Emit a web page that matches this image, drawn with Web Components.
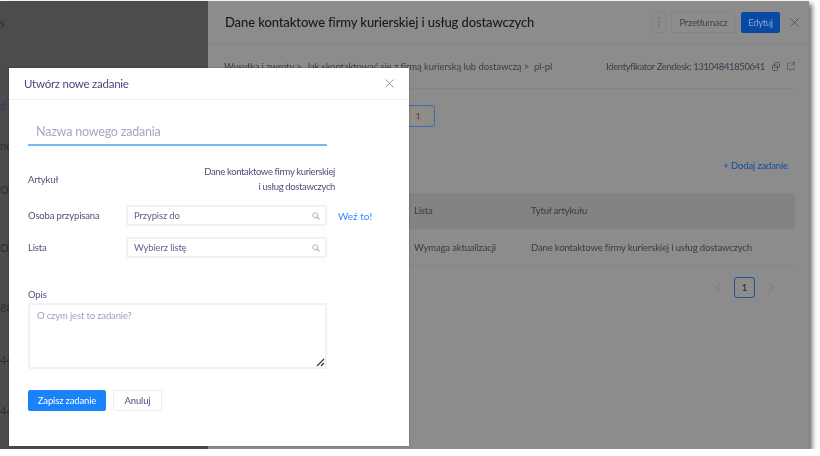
<!DOCTYPE html>
<html lang="pl">
<head>
<meta charset="utf-8">
<title>Utwórz nowe zadanie</title>
<style>
    html, body { margin: 0; padding: 0; background: #fff; overflow: hidden; }
    body { font-family: Lato, "Noto Sans", sans-serif; }
</style>
</head>
<body>
<app-shell>
    <side-list slot="side"></side-list>
    <article-panel slot="main"></article-panel>
    <task-modal slot="modal"></task-modal>
</app-shell>

<script>
class AppShell extends HTMLElement {
    constructor() {
        super();
        this.attachShadow({mode: 'open'}).innerHTML = `
            <style>
                :host {
                    display: block;
                    width: 809px;
                    height: 448px;
                    margin-top: 1px;
                    position: relative;
                    box-shadow: 3px 3px 5px rgba(0, 0, 0, .6);
                    filter: blur(.35px);
                }
                .row { display: flex; height: 100%; }
                .modal { position: absolute; left: 9px; top: 67px; }
            </style>
            <div class="row">
                <slot name="side"></slot>
                <slot name="main"></slot>
            </div>
            <div class="modal"><slot name="modal"></slot></div>
        `;
    }
}

class SideList extends HTMLElement {
    constructor() {
        super();
        this.attachShadow({mode: 'open'}).innerHTML = `
            <style>
                :host {
                    display: block;
                    width: 208px;
                    flex: none;
                    background: #4c4c4c;
                    color: #2e2e2e;
                    font-size: 11px;
                    overflow: hidden;
                }
                div { line-height: 16px; height: 16px; }
                .a { margin-top: 14px; }
                .b { margin-top: 67px; color: #27405c; }
                .c { margin-top: 24px; }
                .d { margin-top: 28px; }
                .e { margin-top: 42px; }
                .f { margin-top: 44px; }
                .g { margin-top: 36px; }
                .h { margin-top: 35px; }
            </style>
            <div class="a">s</div>
            <div class="b">d</div>
            <div class="c">nd</div>
            <div class="d">Oc</div>
            <div class="e">Oc</div>
            <div class="f">887</div>
            <div class="g">44</div>
            <div class="h">44</div>
        `;
    }
}

class ArticlePanel extends HTMLElement {
    constructor() {
        super();
        this.attachShadow({mode: 'open'}).innerHTML = `
            <style>
                :host {
                    display: block;
                    flex: 1;
                    min-width: 0;
                    background: #8c8c8c;
                    color: #3a3a44;
                    font-size: 9.5px;
                    letter-spacing: -.15px;
                }
                header {
                    display: flex;
                    align-items: center;
                    height: 42px;
                    padding: 0 10px 0 17px;
                    border-bottom: 1px solid #858585;
                }
                h1 {
                    flex: 1;
                    margin: 0;
                    font-size: 13px;
                    font-weight: 500;
                    letter-spacing: -.1px;
                    color: #191919;
                    white-space: nowrap;
                }
                .more {
                    box-sizing: border-box;
                    width: 14px;
                    height: 21px;
                    border: 1px solid #858585;
                    border-radius: 2px;
                    display: flex;
                    align-items: center;
                    justify-content: center;
                    margin-right: 5px;
                }
                .btn {
                    box-sizing: border-box;
                    width: 65px;
                    height: 21px;
                    line-height: 19px;
                    text-align: center;
                    border: 1px solid #858585;
                    border-radius: 2px;
                    color: #444;
                    letter-spacing: -.3px;
                }
                .btn.primary {
                    width: 39px;
                    background: #0849a3;
                    border-color: #0849a3;
                    color: #8ba6cc;
                    margin-left: 5px;
                    margin-right: 10px;
                }
                .meta {
                    display: flex;
                    justify-content: space-between;
                    align-items: center;
                    margin: 0 14px 0 16px;
                    height: 44px;
                    border-bottom: 1px solid #858585;
                    color: #3c3c4c;
                    white-space: nowrap;
                    letter-spacing: -.09px;
                }
                .meta .ids { display: flex; align-items: center; letter-spacing: -.38px; }
                .meta svg { margin-left: 7px; }
                .status {
                    display: flex;
                    justify-content: flex-end;
                    align-items: center;
                    box-sizing: border-box;
                    margin: 16px 0 0 0;
                    width: 227px;
                    height: 22px;
                    padding-right: 10px;
                    border: 1px solid #3d6ba8;
                    border-radius: 3px;
                }
                .badge {
                    width: 12px;
                    height: 13px;
                    border: 1px solid #a98876;
                    border-radius: 2px;
                    color: #5e3a25;
                    font-size: 8px;
                    text-align: center;
                    box-sizing: border-box;
                    line-height: 11px;
                }
                .add {
                    margin: 31px 21px 0 0;
                    text-align: right;
                    height: 16px;
                    line-height: 16px;
                    color: #0d4c9e;
                }
                .table { margin: 19px 14px 0 16px; }
                .tr {
                    display: grid;
                    grid-template-columns: 190px 117px 1fr;
                    align-items: center;
                }
                .head {
                    height: 36px;
                    background: #838383;
                    border-radius: 3px 3px 0 0;
                }
                .head span { position: relative; top: -1px; }
                .body { height: 36px; border-bottom: 1px solid #858585; }
                .pager-row {
                    display: flex;
                    justify-content: flex-end;
                    align-items: center;
                    gap: 13px;
                    margin: 11px 35px 0 0;
                }
                .page {
                    width: 21px;
                    height: 21px;
                    box-sizing: border-box;
                    border: 1px solid #28528c;
                    border-radius: 3px;
                    text-align: center;
                    line-height: 19px;
                    color: #222;
                }
                svg { display: block; }
            </style>
            <header>
                <h1>Dane kontaktowe firmy kurierskiej i usług dostawczych</h1>
                <div class="more">
                    <svg width="2" height="10" viewBox="0 0 2 10" fill="#5a5a5a"><circle cx="1" cy="1.5" r=".8"/><circle cx="1" cy="5" r=".8"/><circle cx="1" cy="8.5" r=".8"/></svg>
                </div>
                <div class="btn">Przetłumacz</div>
                <div class="btn primary">Edytuj</div>
                <svg width="9" height="9" viewBox="0 0 9 9" stroke="#555" stroke-width=".9" fill="none"><path d="M.5.5l8 8M8.5.5l-8 8"/></svg>
            </header>
            <div class="meta">
                <span>Wysyłka i zwroty &gt;&nbsp; Jak skontaktować się z firmą kurierską lub dostawczą &gt;&nbsp; pl-pl</span>
                <span class="ids">Identyfikator Zendesk: 13104841850641
                    <svg width="8" height="9" viewBox="0 0 8 9" stroke="#4a4a4a" stroke-width=".8" fill="none"><rect x="2.500" y=".5" width="5" height="5" rx="1"/><rect x=".5" y="3" width="5" height="5.500" rx="1"/></svg>
                    <svg width="8" height="8" viewBox="0 0 8 8" stroke="#5c5c5c" stroke-width=".8" fill="none"><path d="M3.500 1H.5v6.500H7V4.500M4.500.5h3V3.500M7.500.5L3.500 4.500"/></svg>
                </span>
            </div>
            <div class="status"><div class="badge">1</div></div>
            <div class="add">+ Dodaj zadanie</div>
            <div class="table">
                <div class="tr head"><span></span><span>Lista</span><span>Tytuł artykułu</span></div>
                <div class="tr body"><span></span><span>Wymaga aktualizacji</span><span>Dane kontaktowe firmy kurierskiej i usług dostawczych</span></div>
            </div>
            <div class="pager-row">
                <svg width="6" height="9" viewBox="0 0 6 9" stroke="#777" fill="none"><path d="M5 .5l-4 4 4 4"/></svg>
                <div class="page">1</div>
                <svg width="6" height="9" viewBox="0 0 6 9" stroke="#777" fill="none"><path d="M1 .5l4 4-4 4"/></svg>
            </div>
        `;
    }
}

class SearchField extends HTMLElement {
    constructor() {
        super();
        this.attachShadow({mode: 'open'}).innerHTML = `
            <style>
                :host {
                    display: flex;
                    align-items: center;
                    justify-content: space-between;
                    box-sizing: border-box;
                    width: 201px;
                    height: 21px;
                    padding: 0 5px 0 6px;
                    border: 2px solid #f0f1f7;
                    border-radius: 2px;
                    color: #5f5f8c;
                }
            </style>
            <slot></slot>
            <svg width="8" height="8" viewBox="0 0 8 8" stroke="#b5b5b5" fill="none"><circle cx="3.200" cy="3.200" r="2.500"/><path d="M5 5l2.500 2.500" stroke-width="1.200"/></svg>
        `;
    }
}

class FormRow extends HTMLElement {
    constructor() {
        super();
        this.attachShadow({mode: 'open'}).innerHTML = `
            <style>
                :host {
                    display: grid;
                    grid-template-columns: 98px auto 1fr;
                    align-items: center;
                    color: #4f4f80;
                }
            </style>
            <slot name="label"></slot>
            <slot></slot>
            <slot name="extra"></slot>
        `;
    }
}

class TaskModal extends HTMLElement {
    constructor() {
        super();
        this.attachShadow({mode: 'open'}).innerHTML = `
            <style>
                :host {
                    display: block;
                    width: 400px;
                    height: 378px;
                    background: #fff;
                    color: #4f4f80;
                    font-size: 9.5px;
                    letter-spacing: -.15px;
                    box-shadow: 0 0 2px rgba(0, 0, 0, .3);
                }
                header {
                    display: flex;
                    align-items: center;
                    justify-content: space-between;
                    height: 32px;
                    padding: 0 15px;
                    box-sizing: border-box;
                    border-bottom: 1px solid #eef0f4;
                    color: #47477f;
                    font-size: 11.5px;
                    letter-spacing: -.25px;
                }
                .body { padding: 0 19px; }
                .name {
                    box-sizing: border-box;
                    width: 299px;
                    height: 29px;
                    margin-top: 17px;
                    padding: 1px 0 0 8px;
                    line-height: 27px;
                    border-bottom: 2px solid #7ab7fa;
                    color: #a8a6c6;
                    font-size: 12.5px;
                    letter-spacing: -.2px;
                }
                .article {
                    display: flex;
                    justify-content: space-between;
                    align-items: center;
                    width: 307px;
                    margin-top: 18px;
                    line-height: 15px;
                }
                .article .title { text-align: right; letter-spacing: -.37px; }
                .assign { margin-top: 11px; }
                .list { margin-top: 11px; }
                .take { color: #2b8aff; margin-left: 11px; font-size: 10px; letter-spacing: 0; }
                .opis { margin-top: 30px; line-height: 14px; }
                .area {
                    box-sizing: border-box;
                    position: relative;
                    width: 299px;
                    height: 66px;
                    margin-top: 1px;
                    padding: 5px 7px;
                    border: 2px solid #f0f1f7;
                    border-radius: 2px;
                    color: #a09ec0;
                }
                .grip { position: absolute; right: 0; bottom: 0; }
                .actions { display: flex; gap: 7px; margin-top: 21px; }
                .btn {
                    box-sizing: border-box;
                    width: 49px;
                    height: 21px;
                    line-height: 19px;
                    border: 1px solid #eceef3;
                    border-radius: 2px;
                    text-align: center;
                }
                .btn.primary {
                    width: 78px;
                    background: #1a82fb;
                    border-color: #1a82fb;
                    color: #fff;
                }
            </style>
            <header>
                <span>Utwórz nowe zadanie</span>
                <svg width="9" height="9" viewBox="0 0 9 9" stroke="#8d8d8d" stroke-width=".9" fill="none"><path d="M.5.5l8 8M8.5.5l-8 8"/></svg>
            </header>
            <div class="body">
                <div class="name">Nazwa nowego zadania</div>
                <div class="article">
                    <span>Artykuł</span>
                    <span class="title">Dane kontaktowe firmy kurierskiej<br>i usług dostawczych</span>
                </div>
                <form-row class="assign">
                    <span slot="label">Osoba przypisana</span>
                    <search-field>Przypisz do</search-field>
                    <span slot="extra" class="take">Weź to!</span>
                </form-row>
                <form-row class="list">
                    <span slot="label">Lista</span>
                    <search-field>Wybierz listę</search-field>
                </form-row>
                <div class="opis">Opis</div>
                <div class="area">O czym jest to zadanie?
                    <svg class="grip" width="9" height="9" viewBox="0 0 9 9" stroke="#333" stroke-width="1.100" fill="none"><path d="M1 8l7-7M5 8l3-3"/></svg>
                </div>
                <div class="actions">
                    <div class="btn primary">Zapisz zadanie</div>
                    <div class="btn">Anuluj</div>
                </div>
            </div>
        `;
    }
}

customElements.define('app-shell', AppShell);
customElements.define('side-list', SideList);
customElements.define('article-panel', ArticlePanel);
customElements.define('search-field', SearchField);
customElements.define('form-row', FormRow);
customElements.define('task-modal', TaskModal);
</script>
</body>
</html>
